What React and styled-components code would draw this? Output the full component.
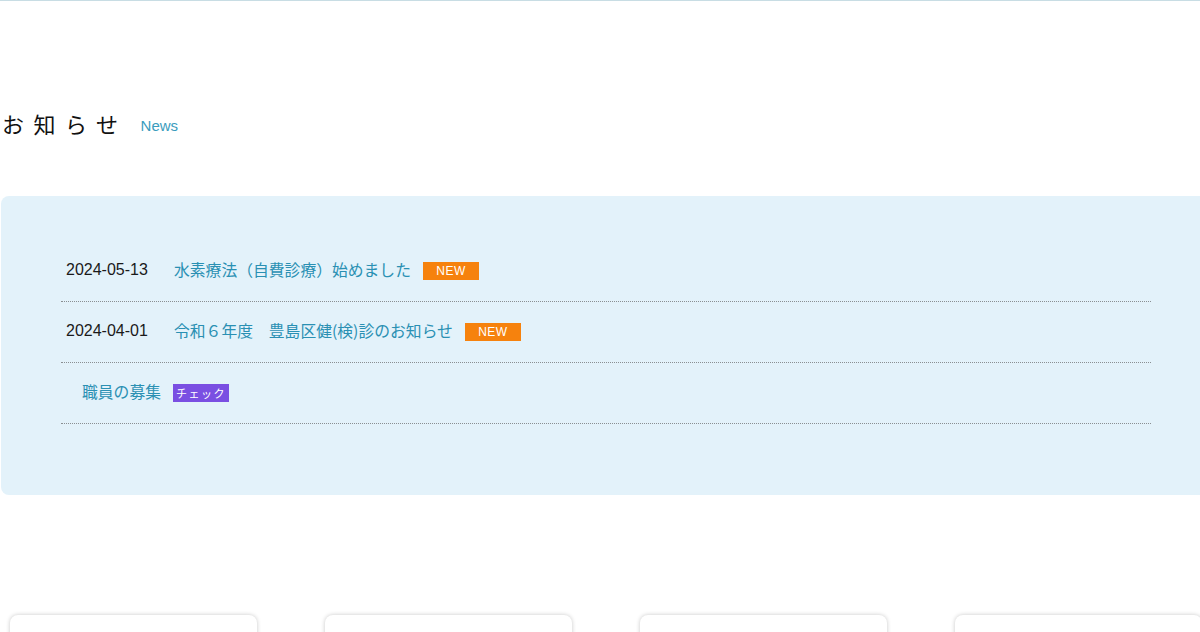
import React from 'react'
import styled, { createGlobalStyle } from 'styled-components'

const GlobalStyle = createGlobalStyle`
  html, body {
    margin: 0;
    padding: 0;
    background: #fff;
    overflow: hidden;
  }
  body {
    font-family: "Liberation Sans", "Noto Sans CJK JP", sans-serif;
    color: #222;
  }
`

const news = [
  { date: '2024-05-13', title: '水素療法（自費診療）始めました', badge: 'NEW' },
  { date: '2024-04-01', title: '令和６年度　豊島区健(検)診のお知らせ', badge: 'NEW' },
  { date: '', title: '職員の募集', badge: 'チェック', variant: 'check' },
]

function App() {
  return (
    <Page>
      <GlobalStyle />
      <Heading>
        <h2>お知らせ</h2>
        <span>News</span>
      </Heading>
      <NewsPanel>
        <NewsList>
          {news.map((item, i) => (
            <NewsRow key={i}>
              {item.date && <NewsDate>{item.date}</NewsDate>}
              <NewsTitle $noDate={!item.date}>{item.title}</NewsTitle>
              <Badge $variant={item.variant}>{item.badge}</Badge>
            </NewsRow>
          ))}
        </NewsList>
      </NewsPanel>
      <CardRow>
        {[0, 1, 2, 3].map((i) => (
          <Card key={i} />
        ))}
      </CardRow>
    </Page>
  )
}

const Page = styled.div`
  width: 1200px;
  height: 632px;
  border-top: 1px solid #c8dde4;
  box-sizing: border-box;
  overflow: hidden;
`

const Heading = styled.div`
  display: flex;
  align-items: center;
  margin: 107px 0 0 2px;
  h2 {
    margin: 0;
    font-family: "Noto Sans CJK JP", sans-serif;
    font-weight: 400;
    font-size: 22px;
    line-height: 30px;
    letter-spacing: 9.5px;
    color: #111;
  }
  span {
    margin-left: 13px;
    margin-top: 4px;
    font-size: 15px;
    color: #3a9cbd;
  }
`

const NewsPanel = styled.div`
  margin: 58px 0 0 1px;
  width: 1230px;
  padding: 45px 0 71px 60px;
  background: #e3f2fa;
  border-radius: 8px 0 0 8px;
`

const NewsList = styled.ul`
  list-style: none;
  margin: 0;
  padding: 0;
  width: 1090px;
`

const NewsRow = styled.li`
  display: flex;
  align-items: center;
  box-sizing: border-box;
  height: 61px;
  padding: 0 0 3px 5px;
  border-bottom: 1px dotted #8a8f92;
`

const NewsDate = styled.span`
  width: 108px;
  font-size: 16px;
  color: #1a1a1a;
  padding-top: 1px;
`

const NewsTitle = styled.span`
  font-family: "Noto Sans CJK JP", sans-serif;
  font-size: 15.8px;
  color: #2a90b3;
  margin-left: ${(p) => (p.$noDate ? '16px' : '0')};
`

const Badge = styled.span`
  display: inline-flex;
  align-items: center;
  justify-content: center;
  width: 56px;
  height: 18px;
  margin-left: 12px;
  margin-top: 3px;
  background: ${(p) => (p.$variant === 'check' ? '#7a4fe2' : '#f6820d')};
  color: #fff;
  font-family: "Liberation Sans", "Noto Sans CJK JP", sans-serif;
  font-size: ${(p) => (p.$variant === 'check' ? '11px' : '12px')};
  letter-spacing: ${(p) => (p.$variant === 'check' ? '1.5px' : '0.5px')};
`

const CardRow = styled.div`
  display: flex;
  gap: 68px;
  margin: 120px 0 0 10px;
`

const Card = styled.div`
  flex: 0 0 247px;
  height: 220px;
  background: #fff;
  border-radius: 8px;
  box-shadow: 0 0 4px rgba(0, 0, 0, 0.22);
`

export default App
